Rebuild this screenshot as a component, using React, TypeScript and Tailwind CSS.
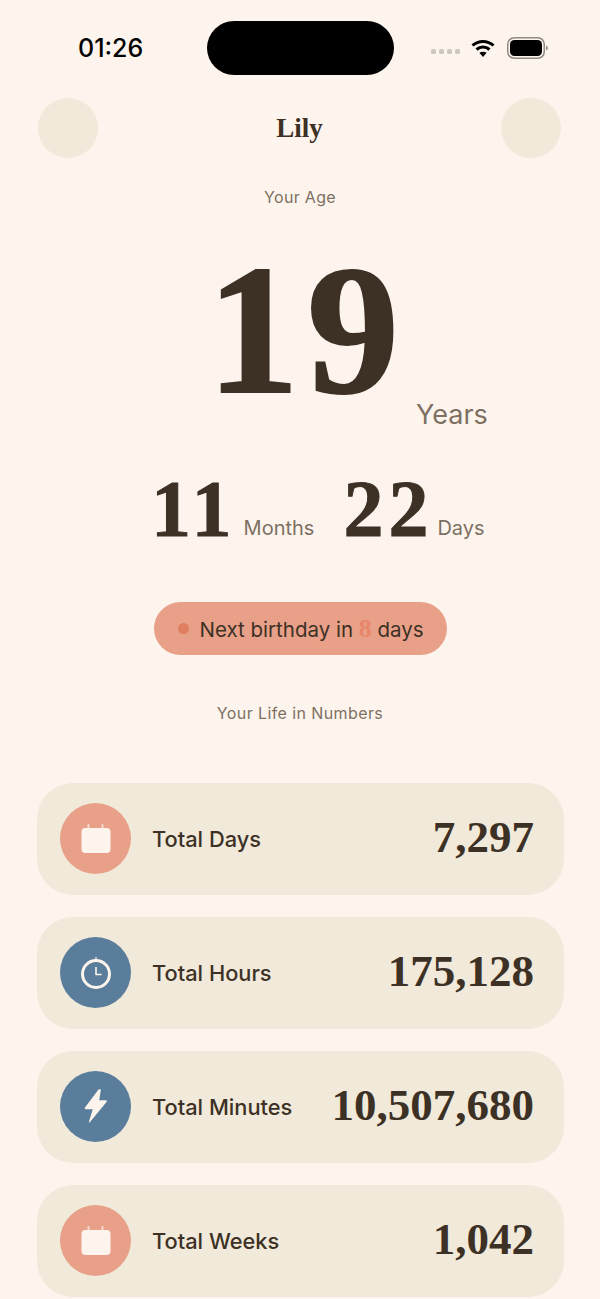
const serif = "font-['Liberation_Serif',serif] font-bold";

function CalendarIcon() {
	return (
		<svg width="32" height="29" viewBox="0 0 32 29" fill="#fdf5ed">
			<rect x="1.5" y="4" width="29" height="25" rx="4" />
			<rect x="7.5" y="0" width="2" height="5" rx="1" fillOpacity="0.7" />
			<rect x="21.5" y="0" width="2" height="5" rx="1" fillOpacity="0.7" />
		</svg>
	);
}

function ClockIcon() {
	return (
		<svg width="32" height="34" viewBox="0 0 32 34" fill="none" stroke="#fdf5ed">
			<circle cx="16" cy="19" r="13.5" strokeWidth="3" />
			<path d="M16 2.5v3" strokeWidth="1.6" strokeLinecap="round" strokeOpacity="0.7" />
			<path d="M16 12.5v7h5" strokeWidth="1.6" strokeLinecap="round" strokeLinejoin="round" />
		</svg>
	);
}

function BoltIcon() {
	return (
		<svg width="24" height="34" viewBox="0 0 24 34" fill="#fdf5ed">
			<path d="M14.5 0.5 1 18.5c-.6.8-.2 1.8.8 1.8h7L5 32.5c-.3 1 .5 1.3 1 .6L22.5 13c.6-.8.2-1.7-.8-1.7h-6.5l1.6-10c.2-1-.9-1.6-1.8-.8Z" />
		</svg>
	);
}

function StatusBar() {
	return (
		<div className="h-[98px] pt-[21px] pl-[78px] flex items-start">
			<span className="w-[65px] mt-[12px] font-['Inter',sans-serif] font-[550] text-[25px] leading-[30px] text-black">
				01:26
			</span>
			<div className="w-[187px] h-[54px] rounded-[27px] bg-black ml-[64px]" />
			<div className="flex items-center mt-[16px] ml-[37px]">
				<div className="flex gap-[3px] mt-[6px]">
					{[0, 1, 2, 3].map((i) => (
						<span key={i} className="w-[5px] h-[5px] rounded-[1.5px] bg-[#cdc6bd]" />
					))}
				</div>
				<svg className="ml-[11px]" width="24" height="20" viewBox="0 0 24 20" fill="none" stroke="#000" strokeWidth="3">
					<path d="M1.5 7.5c6-5.5 15-5.5 21 0" />
					<path d="M5.5 11.5c3.8-3.3 9.2-3.3 13 0" />
					<path d="M12 19l-3.6-4.2c2-1.5 5.2-1.5 7.2 0Z" fill="#000" stroke="none" />
				</svg>
				<svg className="ml-[12px]" width="41" height="22" viewBox="0 0 41 22" fill="none">
					<rect x="0.75" y="0.75" width="36.5" height="20.5" rx="6.5" stroke="#8f8a82" strokeWidth="1.5" />
					<rect x="3" y="3" width="32" height="16" rx="4.5" fill="#000" />
					<path d="M39 8.5c1.2.4 1.8 1.3 1.8 2.5s-.6 2.1-1.8 2.5Z" fill="#8f8a82" />
				</svg>
			</div>
		</div>
	);
}

function StatCard({
	icon,
	tone,
	label,
	value,
}: {
	icon: React.ReactNode;
	tone: "peach" | "blue";
	label: string;
	value: string;
}) {
	return (
		<div className="h-[112px] rounded-[36px] bg-[#f1e9d9] pl-[23px] pr-[30px] flex items-center">
			<div
				className={
					tone === "peach"
						? "w-[71px] h-[71px] -mt-[2px] rounded-full bg-[#e8a088] flex items-center justify-center"
						: "w-[71px] h-[71px] -mt-[2px] rounded-full bg-[#5a7d9c] flex items-center justify-center"
				}
			>
				{icon}
			</div>
			<span className="ml-[21px] text-[21.8px] font-medium text-[#3d3126]">{label}</span>
			<span className={`${serif} ml-auto -mt-[3px] text-[45px] leading-none text-[#3d3126]`}>{value}</span>
		</div>
	);
}

export default function App() {
	return (
		<div className="w-[600px] h-[1299px] overflow-hidden bg-[#fdf5ed] font-['Inter',sans-serif]">
			<StatusBar />

			{/* Header */}
			<div className="pl-[38px] pr-[39px] flex items-center justify-between">
				<div className="w-[60px] h-[60px] rounded-full bg-[#f1e9d9]" />
				<h1 className={`${serif} text-[27px] text-[#3d3126]`}>Lily</h1>
				<div className="w-[60px] h-[60px] rounded-full bg-[#f1e9d9]" />
			</div>

			<p className="mt-[28px] text-center text-[16px] leading-[22px] tracking-[0.3px] text-[#7d7063]">
				Your Age
			</p>

			{/* Age */}
			<div className="mt-[37px] pl-[207px] flex items-end">
				<span className={`${serif} text-[184px] tracking-[8px] leading-[170px] text-[#3d3126] [-webkit-text-stroke:2px_#3d3126]`}>19</span>
				<span className="ml-[9px] -mb-[17px] text-[27px] leading-[34px] text-[#7d7063]">Years</span>
			</div>

			<div className="mt-[54px] pl-[151px] flex items-end">
				<span className={`${serif} text-[80px] tracking-[5px] leading-[80px] text-[#3d3126] [-webkit-text-stroke:1px_#3d3126]`}>11</span>
				<span className="ml-[7px] mb-[8px] text-[20px] leading-[26px] text-[#7d7063]">Months</span>
				<span className={`${serif} ml-[29px] text-[80px] tracking-[5px] leading-[80px] text-[#3d3126] [-webkit-text-stroke:1px_#3d3126]`}>22</span>
				<span className="ml-[4px] mb-[8px] text-[20px] leading-[26px] text-[#7d7063]">Days</span>
			</div>

			{/* Next birthday */}
			<div className="mt-[53px] flex justify-center">
				<div className="w-[293px] h-[53px] rounded-full bg-[#e8a088] pl-[24px] flex items-center">
					<span className="w-[11px] h-[11px] rounded-full bg-[#e07f60]" />
					<span className="ml-[11px] mt-[3px] text-[20.5px] text-[#3d3126]">
						Next birthday in <span className={`${serif} text-[26px] leading-none text-[#e8866a]`}>8</span> days
					</span>
				</div>
			</div>

			<p className="mt-[47px] text-center text-[16px] leading-[22px] tracking-[0.4px] text-[#7d7063]">
				Your Life in Numbers
			</p>

			{/* Stats */}
			<div className="mt-[59px] ml-[37px] w-[527px] flex flex-col gap-[22px]">
				<StatCard icon={<CalendarIcon />} tone="peach" label="Total Days" value="7,297" />
				<StatCard icon={<ClockIcon />} tone="blue" label="Total Hours" value="175,128" />
				<StatCard icon={<BoltIcon />} tone="blue" label="Total Minutes" value="10,507,680" />
				<StatCard icon={<CalendarIcon />} tone="peach" label="Total Weeks" value="1,042" />
			</div>
		</div>
	);
}
